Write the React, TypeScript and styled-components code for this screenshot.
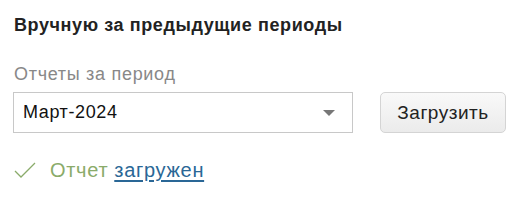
import styled, {createGlobalStyle} from "styled-components";

const GlobalStyle = createGlobalStyle`
    body {
        margin: 0;
        background: #fff;
        font-family: "Liberation Sans", Arial, sans-serif;
    }
`;

const Panel = styled.div`
    padding: 14px 14px 0 14px;
    display: flex;
    flex-direction: column;
`;

const Title = styled.div`
    font-size: 18px;
    font-weight: bold;
    letter-spacing: 0.6px;
    color: #222;
    line-height: 22px;
`;

const Label = styled.div`
    margin-top: 27px;
    font-size: 18px;
    letter-spacing: 0.7px;
    color: #888;
    line-height: 22px;
`;

const Row = styled.div`
    margin-top: 7px;
    display: flex;
    align-items: center;
    gap: 27px;
`;

const Select = styled.div`
    margin-left: -1px;
    width: 338px;
    height: 39px;
    border: 1px solid #c8c8c8;
    display: flex;
    align-items: center;
`;

const SelectValue = styled.span`
    flex: 1;
    padding-left: 9px;
    font-size: 18px;
    letter-spacing: 0.6px;
    color: #111;
`;

const Arrow = styled.span`
    width: 0;
    height: 0;
    margin-right: 17px;
    border-left: 6px solid transparent;
    border-right: 6px solid transparent;
    border-top: 6px solid #777;
`;

const Button = styled.button`
    width: 126px;
    height: 41px;
    border: 1px solid #d4d4d4;
    border-radius: 5px;
    background: linear-gradient(#f9f9f9, #ebebeb);
    font-family: inherit;
    font-size: 19px;
    letter-spacing: 0.5px;
    color: #222;
    padding: 0;
`;

const Status = styled.div`
    margin-top: 25px;
    display: flex;
    align-items: center;
    font-size: 20px;
    letter-spacing: 0.7px;
    line-height: 24px;
`;

const Check = styled.svg`
    width: 22px;
    height: 16px;
    margin-right: 14px;
`;

const StatusText = styled.span`
    color: #8aab6a;
`;

const Link = styled.a`
    margin-left: 6px;
    color: #2a6796;
    text-decoration: underline;
    text-underline-offset: 3px;
`;

export default function App() {
    return <>
        <GlobalStyle/>
        <Panel>
            <Title>Вручную за предыдущие периоды</Title>
            <Label>Отчеты за период</Label>
            <Row>
                <Select>
                    <SelectValue>Март-2024</SelectValue>
                    <Arrow/>
                </Select>
                <Button>Загрузить</Button>
            </Row>
            <Status>
                <Check viewBox="0 0 22 16">
                    <path d="M1 9 L7 15 L21 1" fill="none" stroke="#8aab6a" strokeWidth="1.3"/>
                </Check>
                <StatusText>Отчет</StatusText>
                <Link href="#">загружен</Link>
            </Status>
        </Panel>
    </>;
}
